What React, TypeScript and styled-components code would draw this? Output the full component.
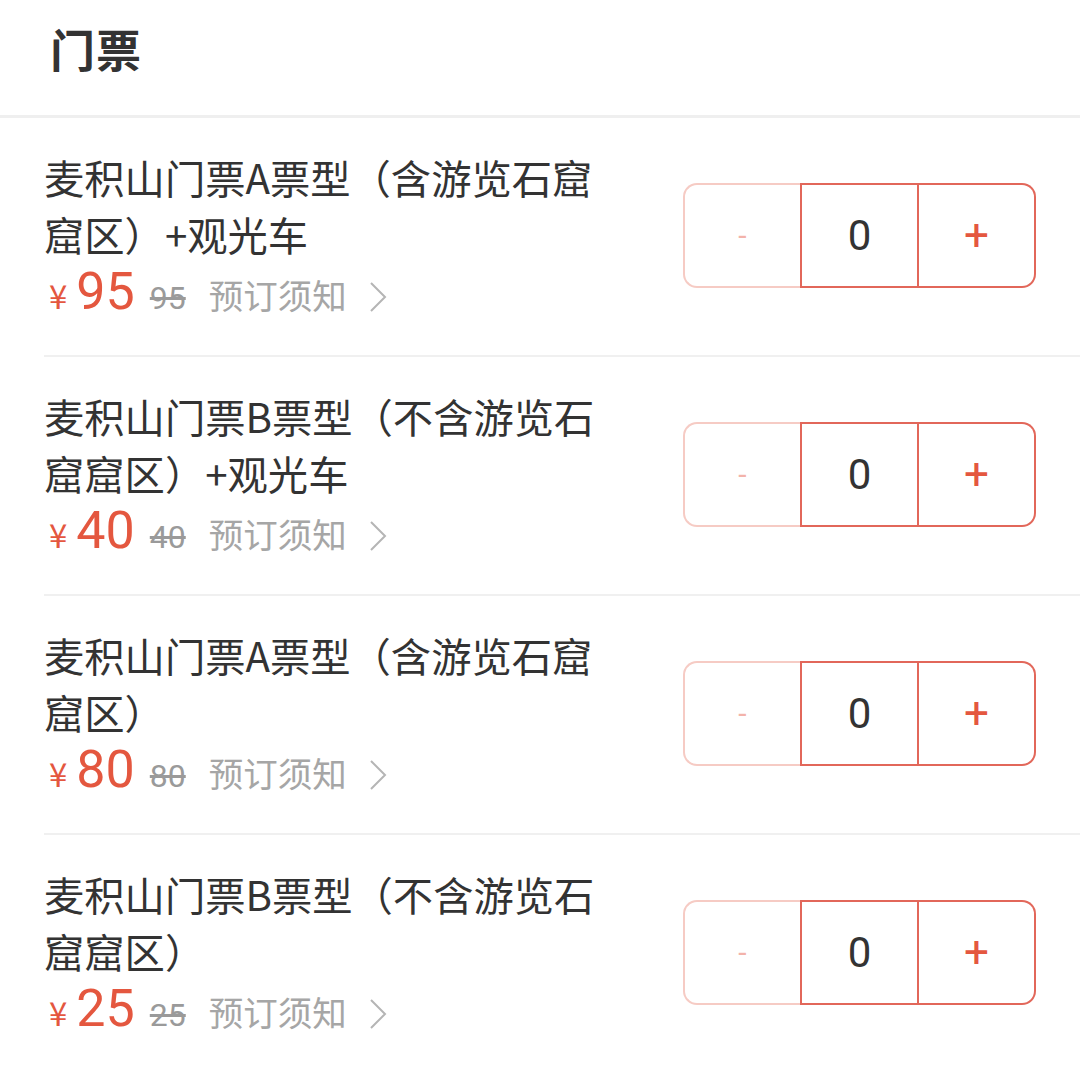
import React from "react";
import styled, { createGlobalStyle } from "styled-components";

const GlobalStyle = createGlobalStyle`
  html, body { margin: 0; padding: 0; background: #ffffff; }
  body { font-family: "Noto Sans CJK SC", "Noto Sans", sans-serif; color: #333; }
`;

const RED = "#e4573f";

const Page = styled.div`
  width: 1080px;
  background: #fff;
`;

const Header = styled.div`
  height: 118px;
  display: flex;
  align-items: center;
  padding: 0 0 18px 50px;
  box-sizing: border-box;
  border-bottom: 3px solid #efefef;
`;

const HeaderTitle = styled.h1`
  margin: 0;
  font-size: 45px;
  font-weight: 700;
  color: #333;
  letter-spacing: 1px;
`;

const List = styled.div`
  padding-left: 44px;
`;

const Row = styled.div<{ $last?: boolean }>`
  display: flex;
  align-items: center;
  justify-content: space-between;
  padding: 30px 44px 33px 0;
  border-bottom: ${(p) => (p.$last ? "none" : "2px solid #f0f0f0")};
`;

const Info = styled.div`
  display: flex;
  flex-direction: column;
`;

const Title = styled.div`
  width: 566px;
  font-size: 40.3px;
  line-height: 57px;
  color: #333;
`;

const PriceLine = styled.div`
  display: flex;
  align-items: baseline;
  height: 60px;
  line-height: 60px;
`;

const Yen = styled.span`
  color: ${RED};
  font-size: 33px;
  margin-left: 5px;
  margin-right: 9px;
`;

const Price = styled.span`
  color: ${RED};
  font-family: Roboto, "Noto Sans", sans-serif;
  font-size: 52px;
`;

const Original = styled.span`
  color: #9a9a9a;
  font-family: Roboto, "Noto Sans", sans-serif;
  font-size: 32px;
  text-decoration: line-through;
  margin-left: 15px;
`;

const Notice = styled.span`
  color: #a6a6a6;
  font-size: 34.5px;
  margin-left: 23px;
  display: inline-flex;
  align-items: center;
  gap: 22px;
`;

const Chevron = styled.svg`
  width: 18px;
  height: 32px;
  align-self: center;
  position: relative;
  top: 3px;
`;

const Stepper = styled.div`
  display: flex;
  width: 353px;
  height: 105px;
  flex-shrink: 0;
`;

const Cell = styled.div<{ $pos: "left" | "mid" | "right" }>`
  flex: 1;
  display: flex;
  align-items: center;
  justify-content: center;
  box-sizing: border-box;
  border: 2px solid ${(p) => (p.$pos === "left" ? "#f6cbc4" : "#e2675a")};
  border-radius: ${(p) =>
    p.$pos === "left" ? "14px 0 0 14px" : p.$pos === "right" ? "0 14px 14px 0" : "0"};
  ${(p) => (p.$pos === "left" ? "border-right: none;" : "")}
  ${(p) => (p.$pos === "right" ? "border-left: none;" : "")}
`;

const Minus = styled.span`
  color: #f3b3aa;
  font-size: 30px;
  font-family: Roboto, sans-serif;
`;

const Count = styled.span`
  color: #333;
  font-size: 42px;
  font-family: Roboto, "Noto Sans", sans-serif;
`;

const Plus = styled.span`
  color: ${RED};
  font-size: 44px;
  font-family: Roboto, sans-serif;
`;

const tickets = [
  { title: "麦积山门票A票型（含游览石窟窟区）+观光车", price: 95 },
  { title: "麦积山门票B票型（不含游览石窟窟区）+观光车", price: 40 },
  { title: "麦积山门票A票型（含游览石窟窟区）", price: 80 },
  { title: "麦积山门票B票型（不含游览石窟窟区）", price: 25 },
];

export default function App() {
  return (
    <Page>
      <GlobalStyle />
      <Header>
        <HeaderTitle>门票</HeaderTitle>
      </Header>
      <List>
        {tickets.map((t, i) => (
          <Row key={i} $last={i === tickets.length - 1}>
            <Info>
              <Title>{t.title}</Title>
              <PriceLine>
                <Yen>¥</Yen>
                <Price>{t.price}</Price>
                <Original>{t.price}</Original>
                <Notice>
                  预订须知
                  <Chevron viewBox="0 0 18 32">
                    <polyline points="2,2 16,16 2,30" fill="none" stroke="#b5b5b5" strokeWidth="2" />
                  </Chevron>
                </Notice>
              </PriceLine>
            </Info>
            <Stepper>
              <Cell $pos="left"><Minus>-</Minus></Cell>
              <Cell $pos="mid"><Count>0</Count></Cell>
              <Cell $pos="right"><Plus>+</Plus></Cell>
            </Stepper>
          </Row>
        ))}
      </List>
    </Page>
  );
}
